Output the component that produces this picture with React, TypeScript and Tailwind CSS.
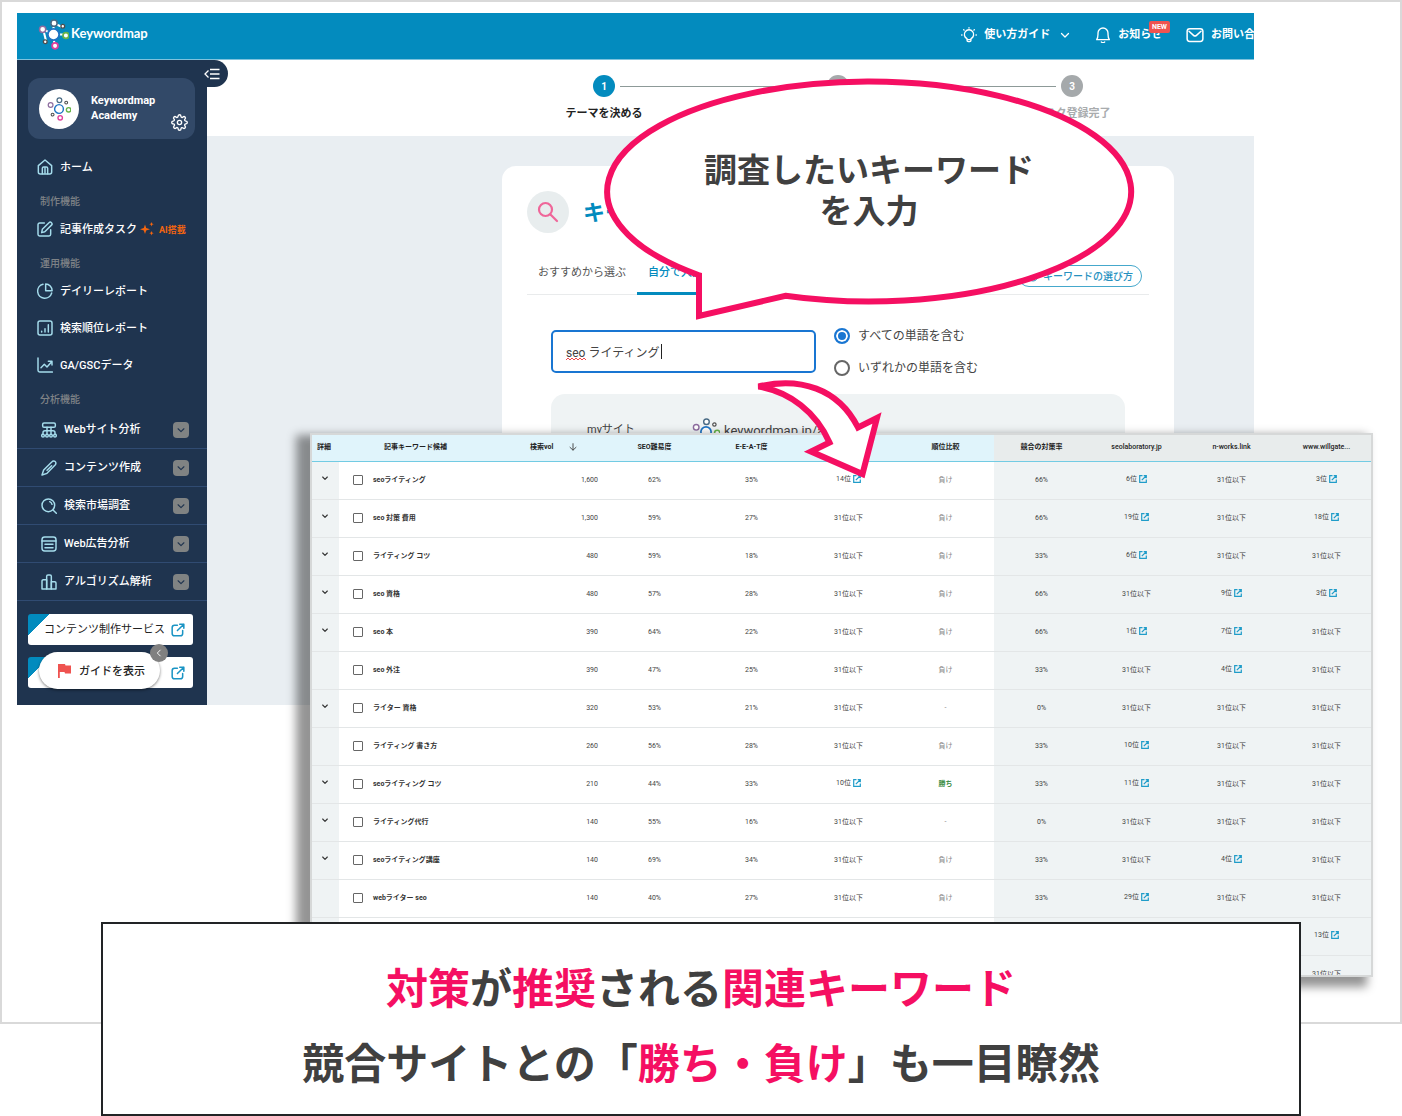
import type { ReactNode } from "react";

const svgBase = {
  fill: "none",
  stroke: "currentColor",
  strokeLinecap: "round" as const,
  strokeLinejoin: "round" as const,
  viewBox: "0 0 24 24",
};

function Icon({ className, children, width = 2.2 }: { className: string; children: ReactNode; width?: number }) {
  return (
    <svg {...svgBase} strokeWidth={width} className={`shrink-0 ${className}`} aria-hidden="true">
      {children}
    </svg>
  );
}

const icons = {
  home: (
    <>
      <path d="M2 10 12 1.500 22 10v9.500a3 3 0 0 1-3 3H5a3 3 0 0 1-3-3Z" />
      <path d="M8 22v-8a2 2 0 0 1 2-2h4a2 2 0 0 1 2 2v8M12 13.500v8" />
    </>
  ),
  edit: (
    <>
      <path d="M11 3H4a2.500 2.500 0 0 0-2.500 2.500V20A2.500 2.500 0 0 0 4 22.500h14a2.500 2.500 0 0 0 2.500-2.500v-7" />
      <path d="m8 12.500 10-10a2.600 2.600 0 0 1 3.700 3.700l-10 10L7 17.500Z" />
    </>
  ),
  pie: (
    <>
      <path d="M9 1.800A10.700 10.700 0 1 0 22 15" />
      <path d="M13 1.500A10 10 0 0 1 22.700 11.500H13Z" />
    </>
  ),
  rank: (
    <>
      <rect x="1.500" y="1.500" width="21" height="21" rx="3" />
      <path d="M7 17v1M12 13v5M17 7v11" />
    </>
  ),
  trend: (
    <>
      <path d="M1.500 1.500V20A2.500 2.500 0 0 0 4 22.500h19" />
      <path d="m6 16 5-5 4 4 7-8M17 6.500h5.500V12" />
    </>
  ),
  sitemap: (
    <>
      <rect x="2.500" y="1.500" width="19" height="6.500" rx="2" />
      <path d="M3 18v-2a3 3 0 0 1 3-3h12a3 3 0 0 1 3 3v2M9 18V8M15 18V8" />
      <circle cx="3" cy="20.500" r="2" />
      <circle cx="9" cy="20.500" r="2" />
      <circle cx="15" cy="20.500" r="2" />
      <circle cx="21" cy="20.500" r="2" />
    </>
  ),
  pencil: (
    <>
      <path d="M1.500 22.500 4 15 16.500 2.500a3.200 3.200 0 0 1 5 4.500L9 20Z" />
      <path d="m9 15.500 7-7" />
    </>
  ),
  search: (
    <>
      <circle cx="11" cy="11" r="9.500" />
      <path d="m18 18 5 5M13 5.500a6 6 0 0 1 3.500 4" />
    </>
  ),
  list: (
    <>
      <rect x="1.500" y="1.500" width="21" height="21" rx="4" />
      <path d="M1.500 7.500h21M6 12.500h12M6 17.500h12" />
    </>
  ),
  bars: (
    <>
      <path d="M1.500 22.500V10.500a2 2 0 0 1 2-2h5v14Z" />
      <path d="M8.500 22.500V3.500a2 2 0 0 1 2-2h3a2 2 0 0 1 2 2v19Z" />
      <path d="M15.500 11.500h5a2 2 0 0 1 2 2v9h-7Z" />
    </>
  ),
  gear: (
    <>
      <circle cx="12" cy="12" r="3" />
      <path d="M19.400 15a1.650 1.650 0 0 0 .33 1.820l.06.06a2 2 0 0 1-2.830 2.830l-.06-.06a1.650 1.650 0 0 0-2.800 1.170V21a2 2 0 0 1-4 0v-.09a1.650 1.650 0 0 0-2.900-1.180l-.06.06a2 2 0 0 1-2.830-2.830l.06-.06A1.650 1.650 0 0 0 3.090 14H3a2 2 0 0 1 0-4h.09a1.650 1.650 0 0 0 1.180-2.900l-.06-.06a2 2 0 0 1 2.830-2.830l.06.06A1.650 1.650 0 0 0 10 3.090V3a2 2 0 0 1 4 0v.09a1.650 1.650 0 0 0 2.900 1.180l.06-.06a2 2 0 0 1 2.830 2.830l-.06.06A1.650 1.650 0 0 0 20.910 10H21a2 2 0 0 1 0 4h-.09a1.650 1.650 0 0 0-1.510 1Z" />
    </>
  ),
  external: (
    <>
      <path d="M11 4H6a4 4 0 0 0-4 4v10a4 4 0 0 0 4 4h10a4 4 0 0 0 4-4v-5" />
      <path d="M11 13 22 2M15 2h7v7" />
    </>
  ),
  down: <path d="m5 9 7 7 7-7" />,
  left: <path d="m15 5-7 7 7 7" />,
};

function Molecule({ className, links = false }: { className: string; links?: boolean }) {
  return (
    <svg viewBox="0 0 30 30" className={`shrink-0 ${className}`} fill="white" aria-hidden="true">
      {links && <path d="m15 15 0-10M15 15h13M15 15l1 11M15 15 5 10M15 4l9 4M5 10l3 12" stroke="white" strokeWidth="2" />}
      <circle cx="15" cy="15" r="5.500" stroke="#1f74c4" strokeWidth="1.800" />
      <circle cx="15.500" cy="4" r="3" stroke="#4a6b85" strokeWidth="1.500" />
      <circle cx="24" cy="7" r="1.800" stroke="#4d4d4d" strokeWidth="1.300" />
      <circle cx="4.500" cy="10" r="3" stroke="#8d6c9f" strokeWidth="1.500" />
      <circle cx="7" cy="22" r="1.800" stroke="#4d4d4d" strokeWidth="1.300" />
      <circle cx="27" cy="16" r="2.800" stroke="#67b34a" strokeWidth="1.700" />
      <circle cx="16.500" cy="26" r="2.800" stroke="#e03f9c" strokeWidth="1.700" />
    </svg>
  );
}

function NavItem({ icon, label, children }: { icon: ReactNode; label: string; children?: ReactNode }) {
  return (
    <a href="#" className="flex h-[37px] items-center gap-[7px] pl-5 text-[11px] font-medium text-white">
      <Icon className="size-4 text-[#a5dcec]">{icon}</Icon>
      <span className="pt-1">{label}</span>
      {children}
    </a>
  );
}

function NavLabel({ children }: { children: ReactNode }) {
  return <p className="flex h-[25px] items-center pt-2 pl-[23px] text-[10px] font-medium text-[#7f8387]">{children}</p>;
}

function NavGroup({ icon, label }: { icon: ReactNode; label: string }) {
  return (
    <button
      type="button"
      className="flex h-[38px] w-full items-center gap-[7px] border-b border-[#304b72] pr-[18px] pl-6 text-[11px] font-medium text-white"
    >
      <Icon className="size-4 text-[#a5dcec]">{icon}</Icon>
      <span className="flex-1 pt-0.5 text-left">{label}</span>
      <span className="flex size-4 items-center justify-center rounded bg-[#808383]">
        <Icon className="size-2.5 text-[#1f344f]" width={2.6}>
          {icons.down}
        </Icon>
      </span>
    </button>
  );
}

function ServiceLink({ label }: { label: string }) {
  return (
    <a
      href="#"
      className="flex h-[31px] items-center justify-between rounded-[3px] bg-white bg-[linear-gradient(135deg,#028bbe_15px,transparent_15px)] pr-2 pl-4 text-[11px] text-[#222]"
    >
      <span className="pt-0.5">{label}</span>
      <Icon className="size-3.5 text-[#1a94c4]" width={2.6}>
        {icons.external}
      </Icon>
    </a>
  );
}

function Sidebar() {
  return (
    <aside className="relative w-[190px] shrink-0 bg-[#1f344f] pb-4">
      <button
        type="button"
        aria-label="メニューを閉じる"
        className="absolute top-0 -right-[21px] flex h-[27px] w-7 items-center rounded-r-full bg-[#1f344f] pl-1 text-white"
      >
        <svg viewBox="0 0 16 12" className="h-3 w-4" fill="none" stroke="currentColor" strokeWidth="1.300" aria-hidden="true">
          <path d="M4.500 2.500 1 6l3.500 3.500M6 1.500h9.500M6 6h9.500M6 10.500h9.500" />
        </svg>
      </button>

      <div className="mt-[18px] mr-3 ml-[11px] flex h-[61px] items-center gap-3 rounded-xl bg-[#324968] pr-[7px] pl-[11px]">
        <span className="flex size-10 shrink-0 items-center justify-center rounded-full bg-white">
          <Molecule className="size-6" />
        </span>
        <p className="flex-1 pb-0.5 text-[11px] leading-[15px] font-bold text-white">
          Keywordmap
          <br />
          Academy
        </p>
        <button type="button" aria-label="設定" className="mt-7 text-white">
          <Icon className="size-[17px]" width={1.900}>
            {icons.gear}
          </Icon>
        </button>
      </div>

      <nav className="mt-[9px]">
        <NavItem icon={icons.home} label="ホーム" />
        <NavLabel>制作機能</NavLabel>
        <NavItem icon={icons.edit} label="記事作成タスク">
          <svg viewBox="0 0 14 14" className="-mr-0.5 -ml-1 size-3.5 shrink-0" fill="#f4650f" aria-hidden="true">
            <path d="M5 2.500 6.200 6 10 7.300 6.200 8.600 5 12 3.800 8.600 0 7.300 3.800 6ZM11.500 0l.6 1.600 1.600.6-1.600.6-.6 1.600-.6-1.600-1.600-.6 1.600-.6ZM11.500 9l.6 1.600 1.600.6-1.600.6-.6 1.600-.6-1.600-1.600-.6 1.600-.6Z" />
          </svg>
          <span className="pt-1 text-[9px] font-bold text-[#f4650f]">AI搭載</span>
        </NavItem>
        <NavLabel>運用機能</NavLabel>
        <NavItem icon={icons.pie} label="デイリーレポート" />
        <NavItem icon={icons.rank} label="検索順位レポート" />
        <NavItem icon={icons.trend} label="GA/GSCデータ" />
        <NavLabel>分析機能</NavLabel>
        <div className="mt-[3px]">
          <NavGroup icon={icons.sitemap} label="Webサイト分析" />
          <NavGroup icon={icons.pencil} label="コンテンツ作成" />
          <NavGroup icon={icons.search} label="検索市場調査" />
          <NavGroup icon={icons.list} label="Web広告分析" />
          <NavGroup icon={icons.bars} label="アルゴリズム解析" />
        </div>
      </nav>

      <div className="mt-[13px] ml-[11px] flex w-[165px] flex-col gap-3">
        <ServiceLink label="コンテンツ制作サービス" />
        <ServiceLink label="コンテンツ分析ツール" />
      </div>

      <div className="absolute bottom-4 left-[22px]">
        <button
          type="button"
          className="flex h-[37px] w-[121px] items-center gap-2 rounded-full bg-white pl-[18px] text-[11px] font-medium text-[#222] shadow-[0_1px_3px_rgba(0,0,0,0.5)]"
        >
          <svg viewBox="0 0 14 14" className="size-3.5" fill="#ef5350" aria-hidden="true">
            <path d="M1 0h7l.5 1.500H14v8H8L7.500 8H2.800v6H1Z" />
          </svg>
          <span className="pt-1">ガイドを表示</span>
        </button>
        <button
          type="button"
          aria-label="ガイドを閉じる"
          className="absolute -top-2 -right-2 flex size-[18px] items-center justify-center rounded-full bg-[#808080] text-white"
        >
          <Icon className="size-2.5" width={2.2}>
            {icons.left}
          </Icon>
        </button>
      </div>
    </aside>
  );
}

function Header() {
  return (
    <header className="flex h-[47px] items-center justify-between border-b border-[#7fc3dd] bg-[#038bbe] pr-[192px] pl-[21px] text-[11px] font-bold text-white">
      <a href="#" className="flex items-center gap-0.5 pb-1">
        <Molecule className="size-[31px]" links />
        <span className="font-['Lato','Noto_Sans_CJK_JP',sans-serif] text-[13px] font-bold">Keywordmap</span>
      </a>
      <nav className="flex items-center pb-0.5">
        <a href="#" className="flex items-center gap-[7px]">
          <Icon className="size-4" width={2}>
            <path d="M9 17.500a7 7 0 1 1 6 0V20a2 2 0 0 1-2 2h-2a2 2 0 0 1-2-2ZM9.500 19h5M12 1v.500M4 4l.7.700M20 4l-.7.700M1 12h.5M22.500 12h.5" />
          </Icon>
          <span>使い方ガイド</span>
          <Icon className="ml-0.5 size-3" width={2.6}>
            {icons.down}
          </Icon>
        </a>
        <a href="#" className="relative ml-6 flex items-center gap-[7px]">
          <Icon className="size-4" width={2}>
            <path d="M2.500 19C4 17 4.500 15 4.500 11V9a7.500 7.500 0 0 1 15 0v2c0 4 .5 6 2 8ZM9.500 22.500a4 4 0 0 0 5 0" />
          </Icon>
          <span>お知らせ</span>
          <span className="absolute -top-1.5 -right-2 flex h-3 items-center rounded-[2px] bg-[#ef5350] px-[3px] text-[7px] font-bold">NEW</span>
        </a>
        <a href="#" className="ml-6 flex items-center gap-[7px]">
          <Icon className="size-[18px]" width={2}>
            <rect x="1.500" y="3.500" width="21" height="17" rx="3.500" />
            <path d="m4 7 6 5.500a3 3 0 0 0 4 0L20 7" />
          </Icon>
          <span>お問い合わせ</span>
        </a>
      </nav>
    </header>
  );
}

function Step({ n, label, active, first, last }: { n: number; label: string; active?: boolean; first?: boolean; last?: boolean }) {
  return (
    <li className="flex w-[234px] flex-col items-center gap-[9px]">
      <span className="flex w-full items-center gap-[5px]">
        <span className={first ? "flex-1" : "h-px flex-1 bg-[#8d9a98]"} />
        <span
          className={
            active
              ? "flex size-[22px] items-center justify-center rounded-full bg-[#038bbe] text-[10px] font-bold text-white"
              : "flex size-[22px] items-center justify-center rounded-full bg-[#a5a9ab] text-[10px] font-bold text-white"
          }
        >
          {n}
        </span>
        <span className={last ? "flex-1" : "h-px flex-1 bg-[#8d9a98]"} />
      </span>
      <span className={active ? "text-[11px] font-bold text-[#222]" : "text-[11px] font-bold text-[#a9acae]"}>{label}</span>
    </li>
  );
}

const radioClass =
  "size-4 appearance-none rounded-full border-2 border-[#666] bg-white checked:border-[#1976d2] checked:bg-[#1976d2] checked:shadow-[inset_0_0_0_2px_white]";

function KeywordCard() {
  return (
    <section className="mx-auto mt-[30px] w-[672px] rounded-t-[14px] bg-white px-[25px] pt-[25px]">
      <div className="flex items-center gap-3.5">
        <span className="flex size-[42px] items-center justify-center rounded-full bg-[#e8edee] text-[#ef6699]">
          <Icon className="size-6" width={2.200}>
            <circle cx="9.500" cy="9.500" r="6.500" />
            <path d="m14.500 14.500 6.500 6.500" />
          </Icon>
        </span>
        <h1 className="text-[22px] font-bold text-[#028bbe]">キーワードを入力</h1>
      </div>

      <div className="mt-[19px] flex items-end border-b border-[#e9ebec] text-[11px]">
        <button type="button" className="h-[42px] px-[11px] text-[#555]">
          おすすめから選ぶ
        </button>
        <button type="button" className="-mb-px h-[43px] border-b-[3px] border-[#038bbe] px-[11px] pt-0.5 font-medium text-[#038bbe]">
          自分で入力する
        </button>
        <button
          type="button"
          className="mr-[7px] mb-[7px] ml-auto flex h-[22px] items-center gap-1 rounded-full border border-[#45a8cc] px-2 text-[10px] font-medium text-[#2691bf]"
        >
          <Icon className="size-3" width={2}>
            <circle cx="12" cy="12" r="10" />
            <path d="M9 9a3 3 0 1 1 3 4M12 17v.500" />
          </Icon>
          キーワードの選び方
        </button>
      </div>

      <div className="flex gap-[18px] px-6 pt-[35px] text-xs text-[#444]">
        <div className="relative">
          <input
            type="text"
            aria-label="キーワード"
            defaultValue="seo ライティング"
            className="h-[43px] w-[265px] rounded-[5px] border-2 border-[#1976d2] bg-white px-[13px] text-xs text-[#444] outline-none"
          />
          <svg viewBox="0 0 20 4" className="absolute top-[27px] left-[15px] h-1 w-5" fill="none" stroke="#f0484a" aria-hidden="true">
            <path d="m0 3 2-2 2 2 2-2 2 2 2-2 2 2 2-2 2 2 2-2 2 2" />
          </svg>
          <span className="absolute top-[14px] left-[110px] h-[15px] w-px bg-[#222]" />
        </div>
        <div className="-mt-[3px] flex flex-col gap-3.5">
          <label className="flex h-[18px] items-center gap-2">
            <input type="radio" name="match" defaultChecked className={radioClass} />
            すべての単語を含む
          </label>
          <label className="flex h-[18px] items-center gap-2">
            <input type="radio" name="match" className={radioClass} />
            いずれかの単語を含む
          </label>
        </div>
      </div>

      <div className="mx-6 mt-[17px] flex h-72 items-start rounded-[14px] bg-[#eff3f4] px-9 pt-6 text-[#444]">
        <span className="w-[105px] pt-1 text-[11px]">myサイト</span>
        <Molecule className="size-7" />
        <span className="pt-[3px] pl-1 text-[13px]">keywordmap.jp/academy/</span>
      </div>
    </section>
  );
}

function AppScreen() {
  return (
    <div className="mr-[146px] ml-[15px] overflow-hidden">
      <div className="-mr-[215px]">
        <Header />
        <div className="flex">
          <Sidebar />
          <main className="flex h-[645px] min-w-0 flex-1 flex-col overflow-hidden bg-[#e9eef2]">
            <ol className="flex h-[76px] shrink-0 justify-center bg-white pt-[15px]">
              <Step n={1} label="テーマを決める" active first />
              <Step n={2} label="キーワード選択" />
              <Step n={3} label="タスク登録完了" last />
            </ol>
            <KeywordCard />
          </main>
        </div>
      </div>
    </div>
  );
}

type Row = {
  open?: boolean;
  name: string;
  vol: string;
  seo: string;
  eeat: string;
  rank: string;
  result: string;
  rate: string;
  sites: [string, string, string];
};

const OUT = "31位以下";

const rows: Row[] = [
  { open: true, name: "seoライティング", vol: "1,600", seo: "62%", eeat: "35%", rank: "14位", result: "負け", rate: "66%", sites: ["6位", OUT, "3位"] },
  { open: true, name: "seo 対策 費用", vol: "1,300", seo: "59%", eeat: "27%", rank: OUT, result: "負け", rate: "66%", sites: ["19位", OUT, "18位"] },
  { open: true, name: "ライティング コツ", vol: "480", seo: "59%", eeat: "18%", rank: OUT, result: "負け", rate: "33%", sites: ["6位", OUT, OUT] },
  { open: true, name: "seo 資格", vol: "480", seo: "57%", eeat: "28%", rank: OUT, result: "負け", rate: "66%", sites: [OUT, "9位", "3位"] },
  { open: true, name: "seo 本", vol: "390", seo: "64%", eeat: "22%", rank: OUT, result: "負け", rate: "66%", sites: ["1位", "7位", OUT] },
  { name: "seo 外注", vol: "390", seo: "47%", eeat: "25%", rank: OUT, result: "負け", rate: "33%", sites: [OUT, "4位", OUT] },
  { open: true, name: "ライター 資格", vol: "320", seo: "53%", eeat: "21%", rank: OUT, result: "-", rate: "0%", sites: [OUT, OUT, OUT] },
  { name: "ライティング 書き方", vol: "260", seo: "56%", eeat: "28%", rank: OUT, result: "負け", rate: "33%", sites: ["10位", OUT, OUT] },
  { open: true, name: "seoライティング コツ", vol: "210", seo: "44%", eeat: "33%", rank: "10位", result: "勝ち", rate: "33%", sites: ["11位", OUT, OUT] },
  { open: true, name: "ライティング代行", vol: "140", seo: "55%", eeat: "16%", rank: OUT, result: "-", rate: "0%", sites: [OUT, OUT, OUT] },
  { open: true, name: "seoライティング講座", vol: "140", seo: "69%", eeat: "34%", rank: OUT, result: "負け", rate: "33%", sites: [OUT, "4位", OUT] },
  { name: "webライター seo", vol: "140", seo: "40%", eeat: "27%", rank: OUT, result: "負け", rate: "33%", sites: ["29位", OUT, OUT] },
  { name: "", vol: "", seo: "", eeat: "", rank: "", result: "", rate: "", sites: ["", "", "13位"] },
  { name: "", vol: "", seo: "", eeat: "", rank: "", result: "", rate: "", sites: ["", "", OUT] },
];

function Rank({ value }: { value: string }) {
  if (value === OUT || value === "") return <>{value}</>;
  return (
    <span className="flex items-center justify-center gap-0.5 pb-0.5">
      {value}
      <a href="#" aria-label={`${value}のページを開く`} className="text-[#1f9cc9]">
        <svg viewBox="0 0 8 8" className="size-2" fill="none" stroke="currentColor" strokeWidth="1.200" aria-hidden="true">
          <path d="M3.500 .7H.7v6.600h6.600V4.500M4.700 .7h2.600v2.600M7 1 2.800 5.200" />
        </svg>
      </a>
    </span>
  );
}

function KeywordTable() {
  return (
    <div className="absolute top-[431px] right-[27px] bottom-[45px] left-[308px] overflow-hidden border-2 border-[#d6d8d8] bg-white shadow-[-10px_6px_9px_4px_rgba(0,0,0,0.42)]">
      <table className="w-[calc(100%+3px)] table-fixed border-collapse text-center text-[7px] text-[#444]">
        <colgroup>
          <col className="w-[27px]" />
          <col />
          <col className="w-[97px]" />
          <col className="w-[97px]" />
          <col className="w-[97px]" />
          <col className="w-[97px]" />
          <col className="w-[97px]" />
          <col className="w-[95px]" />
          <col className="w-[95px]" />
          <col className="w-[95px]" />
          <col className="w-[95px]" />
        </colgroup>
        <thead>
          <tr className="h-[26px] border-b border-[#72cbe3] bg-[#e0f4fb] text-[#222]">
            <th className="pr-[3px] pb-0.5 font-bold whitespace-nowrap">詳細</th>
            <th className="pr-[17px] pb-0.5 font-bold">記事キーワード候補</th>
            <th className="pb-0.5 font-bold">
              <span className="flex items-center gap-4 pl-[21px]">
                検索vol
                <Icon className="size-2 text-[#444]" width={2.800}>
                  <path d="M12 2v19M3 13l9 8.500 9-8.500" />
                </Icon>
              </span>
            </th>
            <th className="pb-0.5 font-bold">SEO難易度</th>
            <th className="pb-0.5 font-bold">E-E-A-T度</th>
            <th className="pb-0.5 font-bold">自社順位</th>
            <th className="pb-0.5 font-bold">順位比較</th>
            <th className="bg-[#e8ecec] pb-0.5 font-bold">競合の対策率</th>
            <th className="bg-[#e8ecec] pb-0.5 font-medium">seolaboratory.jp</th>
            <th className="bg-[#e8ecec] pb-0.5 font-medium">n-works.link</th>
            <th className="bg-[#e8ecec] pb-0.5 font-medium">www.willgate...</th>
          </tr>
        </thead>
        <tbody>
          {rows.map((row, r) => (
            <tr key={r} className="h-[38px] border-b border-[#e3e6e7]">
              <td className="bg-[#eff3f4] pr-0.5 pb-1">
                {row.open && (
                  <button type="button" aria-label="詳細を開く" className="mx-auto block">
                    <Icon className="size-2 text-[#333]" width={3.4}>
                      {icons.down}
                    </Icon>
                  </button>
                )}
              </td>
              <td className="pl-3.5">
                <label className="flex items-center gap-2.5 text-left font-bold text-[#333]">
                  <input type="checkbox" className="size-2.5 appearance-none rounded-[1px] border border-[#666] bg-white" />
                  {row.name}
                </label>
              </td>
              <td className="pr-2 text-right">{row.vol}</td>
              <td>{row.seo}</td>
              <td>{row.eeat}</td>
              <td>
                <Rank value={row.rank} />
              </td>
              <td className={row.result === "勝ち" ? "font-bold text-[#3f8f4a]" : "text-[#888]"}>{row.result}</td>
              <td className="bg-[#eff3f4]">{row.rate}</td>
              {row.sites.map((site, i) => (
                <td key={i} className="bg-[#eff3f4]">
                  <Rank value={site} />
                </td>
              ))}
            </tr>
          ))}
        </tbody>
      </table>
    </div>
  );
}

function SpeechBubble() {
  return (
    <div className="absolute top-[74px] left-[599px] h-[247px] w-[536px]">
      <svg viewBox="600 76 536 247" className="absolute inset-0 size-full" fill="white" stroke="#f50f62" strokeWidth="6" aria-hidden="true">
        <path d="M698 275.200A262 110 0 1 1 784.500 295.800L698 316Z" />
      </svg>
      <p className="relative pt-[74px] text-center text-[33px] leading-[41px] font-bold text-[#404040]">
        調査したいキーワード
        <br />
        を入力
      </p>
    </div>
  );
}

function Arrow() {
  return (
    <svg
      viewBox="752 374 136 110"
      className="absolute top-[372px] left-[750px] h-[110px] w-[136px]"
      fill="white"
      stroke="#f50f62"
      strokeWidth="6"
      aria-hidden="true"
    >
      <path d="M758.500 386.500C800 377 838 388 858 427.500L877 418 862.500 474 811 451.500 829.500 442.500C816 412 790 392 758.500 386.500Z" />
    </svg>
  );
}

export default function App() {
  return (
    <div className="bg-white font-['Roboto','Noto_Sans_CJK_JP',sans-serif]" lang="ja">
      <div className="relative border-2 border-[#d9d9d9] pt-[11px] pb-[317px]">
        <AppScreen />
        <KeywordTable />
        <SpeechBubble />
        <Arrow />
      </div>
      <div className="relative mx-[101px] -mt-[102px] border-2 border-[#222426] bg-white pt-7 pb-3 text-center text-[42px] leading-[75px] font-bold text-[#404040]">
        <p>
          <span className="text-[#f50f62]">対策</span>が<span className="text-[#f50f62]">推奨</span>される
          <span className="text-[#f50f62]">関連キーワード</span>
        </p>
        <p>
          競合サイトとの「<span className="text-[#f50f62]">勝ち・負け</span>」も一目瞭然
        </p>
      </div>
    </div>
  );
}
